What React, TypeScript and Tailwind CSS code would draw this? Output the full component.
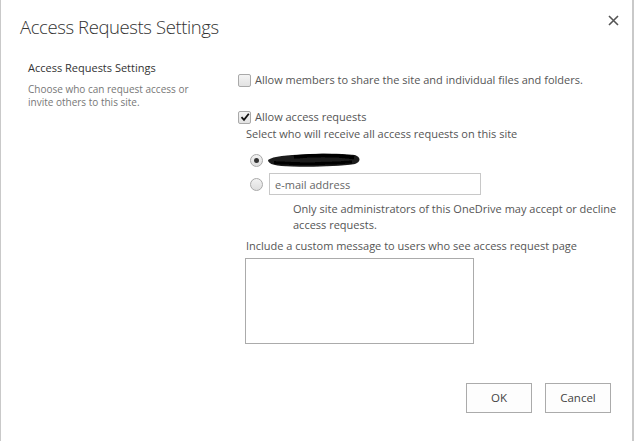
import React from 'react';

const font = { fontFamily: '"Open Sans", "Liberation Sans", sans-serif' };

function Checkbox({ checked }: { checked?: boolean }) {
  return (
    <span className="w-[13px] h-[13px] shrink-0 rounded-[2px] border border-[#a9a9a9] bg-gradient-to-b from-[#f4f4f4] to-[#e2e2e2] flex items-center justify-center">
      {checked && (
        <svg width="10" height="10" viewBox="0 0 10 10">
          <path d="M1.5 5.2 L4 7.8 L8.8 1.8" fill="none" stroke="#111" strokeWidth="1.8" />
        </svg>
      )}
    </span>
  );
}

function Radio({ checked }: { checked?: boolean }) {
  return (
    <span className="w-[13px] h-[13px] shrink-0 rounded-full border border-[#a9a9a9] bg-gradient-to-b from-[#f2f2f2] to-[#dedede] flex items-center justify-center">
      {checked && <span className="w-[5px] h-[5px] rounded-full bg-[#333]" />}
    </span>
  );
}

// scribbled-over name
function Blob() {
  return (
    <svg width="96" height="16" viewBox="0 0 96 16" className="-ml-[3px] shrink-0">
      <defs>
        <filter id="blur" x="-10%" y="-60%" width="120%" height="220%">
          <feGaussianBlur stdDeviation="0.7" />
        </filter>
      </defs>
      <g filter="url(#blur)">
        <path
          d="M2 8 C7 4, 22 3, 38 2.5 C55 1.5, 75 1.5, 89 3 C95 5, 95 10, 89 12 C72 14.5, 48 15, 26 14.5 C10 14, 2 12.5, 2 8 Z"
          fill="#1a1a1a"
        />
        <path d="M28 5 C50 3, 70 3, 88 5.5" stroke="#000" strokeWidth="3.5" fill="none" />
        <path d="M8 10.5 C30 12, 60 12, 86 10" stroke="#050505" strokeWidth="3" fill="none" />
      </g>
    </svg>
  );
}

export default function App() {
  return (
    <div className="w-[635px] h-[441px] bg-white" style={font}>
      <div className="w-[634px] h-[441px] border-l border-r-2 border-[#c9c9c9] text-[#444]">
        {/* header */}
        <div className="flex justify-between items-start pl-[19px] pr-[13px] pt-[13px]">
          <h1 className="text-[18.5px] font-light leading-[28px] text-[#333] tracking-[-0.4px]">Access Requests Settings</h1>
          <button className="mt-[2px]">
            <svg width="11" height="11" viewBox="0 0 11 11">
              <path d="M1 1 L10 10 M10 1 L1 10" stroke="#555" strokeWidth="1.6" />
            </svg>
          </button>
        </div>

        <div className="flex mt-[19px]">
          {/* left column */}
          <div className="w-[237px] shrink-0 pl-[27px] pr-[20px]">
            <div className="text-[11px] leading-[16px] text-[#333]">Access Requests Settings</div>
            <p className="mt-[7px] w-[166px] text-[10px] leading-[13px] text-[#777]">
              Choose who can request access or invite others to this site.
            </p>
          </div>

          {/* right column */}
          <div className="flex-1 pt-[12px] text-[11px] leading-[16px] text-[#555]">
            <label className="flex items-center gap-[4px]">
              <Checkbox />
              <span>Allow members to share the site and individual files and folders.</span>
            </label>

            <label className="flex items-center gap-[4px] mt-[21px]">
              <Checkbox checked />
              <span>Allow access requests</span>
            </label>

            <div className="pl-[8px]">
              <div className="mt-[1px]">Select who will receive all access requests on this site</div>

              <div className="pl-[4px] mt-[11px] flex items-center gap-[6px] h-[14px]">
                <Radio checked />
                <Blob />
              </div>

              <div className="pl-[4px] mt-[6px] flex items-center gap-[6px]">
                <Radio />
                <input
                  className="w-[212px] h-[22px] border border-[#c8c8c8] px-[5px] text-[11px] text-[#555] placeholder:text-[#666] outline-none"
                  placeholder="e-mail address"
                />
              </div>

              <p className="pl-[47px] mt-[6px] w-[382px]">
                Only site administrators of this OneDrive may accept or decline access requests.
              </p>

              <div className="mt-[5px]">Include a custom message to users who see access request page</div>
              <textarea className="mt-[4px] -ml-[1px] w-[229px] h-[86px] border border-[#ababab] resize-none outline-none block" />
            </div>

            <div className="flex justify-end gap-[13px] mt-[39px] pr-[21px]">
              <button className="w-[66px] h-[30px] border border-[#ababab] bg-[#fdfdfd] text-[11.5px] text-[#444]">OK</button>
              <button className="w-[66px] h-[30px] border border-[#ababab] bg-[#fdfdfd] text-[11.5px] text-[#444]">Cancel</button>
            </div>
          </div>
        </div>
      </div>
    </div>
  );
}
